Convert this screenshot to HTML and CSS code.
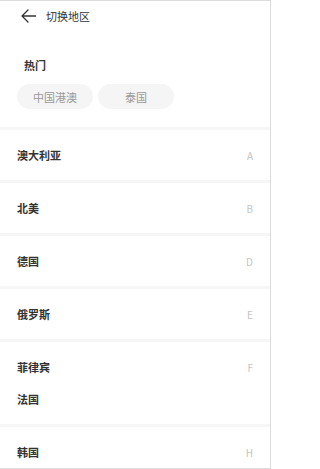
FILE: index.html
```html
<!DOCTYPE html>
<html lang="zh-CN">
<head>
<meta charset="utf-8">
<title>切换地区</title>
<link rel="stylesheet" href="styles.css">
</head>
<body>
<div class="page">
  <header class="header">
    <svg class="back" width="15" height="14" viewBox="0 0 15 14" aria-hidden="true">
      <path d="M14.5 7 H1 M7 1 L1 7 L7 13" fill="none" stroke="#333" stroke-width="1.3" stroke-linecap="round" stroke-linejoin="round"/>
    </svg>
    <span class="title">切换地区</span>
  </header>

  <section class="hot">
    <div class="hot-title">热门</div>
    <div class="chips">
      <span class="chip">中国港澳</span>
      <span class="chip">泰国</span>
    </div>
  </section>

  <section class="group">
    <div class="row"><span class="name">澳大利亚</span><span class="letter">A</span></div>
  </section>
  <section class="group">
    <div class="row"><span class="name">北美</span><span class="letter">B</span></div>
  </section>
  <section class="group">
    <div class="row"><span class="name">德国</span><span class="letter">D</span></div>
  </section>
  <section class="group">
    <div class="row"><span class="name">俄罗斯</span><span class="letter">E</span></div>
  </section>
  <section class="group">
    <div class="row"><span class="name">菲律宾</span><span class="letter">F</span></div>
    <div class="row"><span class="name">法国</span></div>
  </section>
  <section class="group">
    <div class="row"><span class="name">韩国</span><span class="letter">H</span></div>
  </section>
</div>
</body>
</html>
```

FILE: styles.css
```css
html, body {
  margin: 0;
  padding: 0;
  background: #fff;
}

body {
  font-family: "Noto Sans CJK SC", "Noto Sans", sans-serif;
  color: #333;
}

.page {
  width: 271px;
  height: 469px;
  box-sizing: border-box;
  border-top: 1px solid #dcdcdc;
  border-right: 1px solid #dcdcdc;
  border-bottom: 1px solid #dcdcdc;
  overflow: hidden;
}

.header {
  height: 30px;
  display: flex;
  align-items: center;
  padding-left: 21px;
  gap: 10px;
}

.back {
  display: block;
}

.title {
  font-size: 11px;
  line-height: 16px;
  color: #333;
}

.hot {
  padding: 26px 0 18px 17px;
}

.hot-title {
  padding-left: 7px;
  font-size: 11px;
  line-height: 16px;
  font-weight: bold;
  color: #333;
  margin-bottom: 11px;
}

.chips {
  display: flex;
  gap: 5px;
}

.chip {
  width: 76px;
  height: 25px;
  border-radius: 13px;
  background: #f5f5f5;
  color: #999;
  font-size: 11px;
  display: flex;
  align-items: center;
  justify-content: center;
}

.group {
  border-top: 3px solid #f6f6f6;
  padding: 9px 17px 9px 17px;
}

.row {
  height: 32px;
  display: flex;
  align-items: center;
  justify-content: space-between;
}

.name {
  font-size: 11px;
  font-weight: bold;
  color: #333;
}

.letter {
  font-size: 10px;
  color: #c4c4c4;
}
```
